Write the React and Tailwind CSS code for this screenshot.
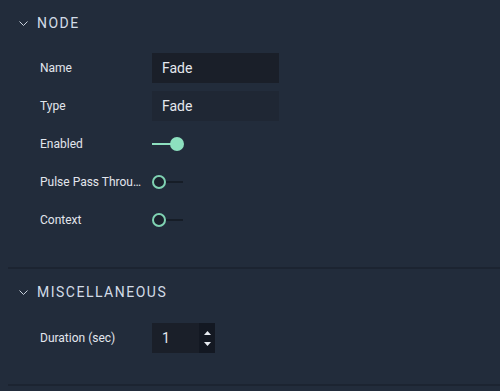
import { useState } from "react";

const Chevron = () => (
    <svg width="9" height="5" viewBox="0 0 9 5" className="text-[#c9d2dd]">
        <polyline points="0.5,0.5 4.5,4.5 8.5,0.5" fill="none" stroke="currentColor" strokeWidth="1" />
    </svg>
);

const SectionHeader = ({ title }) => (
    <div className="flex h-[46px] items-center gap-[9px] pl-[19px]">
        <Chevron />
        <span className="text-[14px] font-normal tracking-[1.5px] text-[#d3dce7]">{title}</span>
    </div>
);

const Row = ({ label, children }) => (
    <div className="mb-2 flex h-[30px] items-center">
        <span className="w-[104px] truncate pl-[40px] pr-1 text-[12px] text-[#e2e6ed] box-content">{label}</span>
        <div className="ml-[4px]">{children}</div>
    </div>
);

const TextField = ({ value, disabled }) => (
    <div
        className={`flex h-[30px] w-[127px] items-center px-[10px] text-[14px] text-[#e4e8ee] ${
            disabled ? "bg-[#1f2734]" : "bg-[#1a1f29]"
        }`}
    >
        {value}
    </div>
);

const Toggle = ({ on }) => (
    <div className="relative h-[14px] w-[32px]">
        {on ? (
            <>
                <div className="absolute left-0 top-[6px] h-[2px] w-[22px] bg-[#8de0bf]" />
                <div className="absolute left-[18px] top-0 h-[14px] w-[14px] rounded-full bg-[#8de0bf]" />
            </>
        ) : (
            <>
                <div className="absolute left-[12px] top-[6px] h-[2px] w-[19px] bg-[#161d27]" />
                <div className="absolute left-0 top-0 h-[14px] w-[14px] rounded-full border-2 border-[#7fd2b2] bg-[#1b222d]" />
            </>
        )}
    </div>
);

const NumberField = ({ value }) => (
    <div className="flex h-[30px] w-[63px] bg-[#1a1f29]">
        <div className="flex flex-1 items-center pl-[10px] text-[14px] text-[#e4e8ee]">{value}</div>
        <div className="flex w-[16px] flex-col items-center justify-center gap-[7px] bg-[#131822]">
            <svg width="7" height="4" viewBox="0 0 7 4">
                <polygon points="0,4 3.5,0 7,4" fill="#e8ecf2" />
            </svg>
            <svg width="7" height="4" viewBox="0 0 7 4">
                <polygon points="0,0 3.5,4 7,0" fill="#e8ecf2" />
            </svg>
        </div>
    </div>
);

export default function App() {
    const [name] = useState("Fade");

    return (
        <div className="h-[391px] w-[500px] overflow-hidden bg-[#222c3b] font-['Roboto',sans-serif]">
            <SectionHeader title="NODE" />
            <div className="pt-[7px] pb-[24px]">
                <Row label="Name">
                    <TextField value={name} />
                </Row>
                <Row label="Type">
                    <TextField value="Fade" disabled />
                </Row>
                <Row label="Enabled">
                    <Toggle on />
                </Row>
                <Row label="Pulse Pass Through">
                    <Toggle />
                </Row>
                <Row label="Context">
                    <Toggle />
                </Row>
            </div>
            <div className="ml-[8px] h-[2px] bg-[#1c2431]" />
            <SectionHeader title="MISCELLANEOUS" />
            <div className="pt-[8px] pb-[23px]">
                <Row label="Duration (sec)">
                    <NumberField value="1" />
                </Row>
            </div>
            <div className="ml-[8px] h-[2px] bg-[#1c2431]" />
        </div>
    );
}
